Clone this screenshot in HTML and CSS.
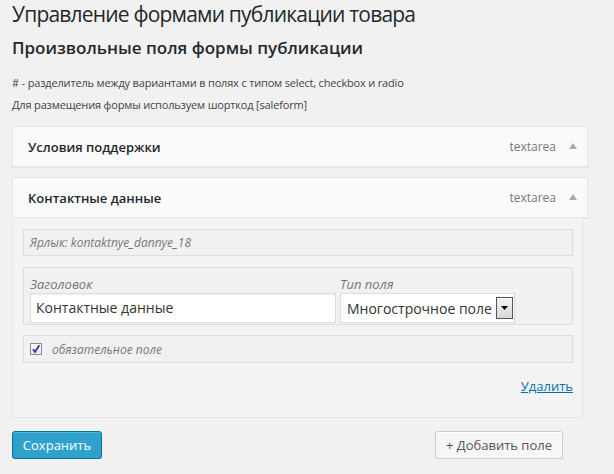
FILE: index.html
```html
<!DOCTYPE html>
<html lang="ru">
<head>
<meta charset="utf-8">
<title>Управление формами публикации товара</title>
<link rel="stylesheet" href="styles.css">
</head>
<body>
<div class="wrap">
  <h1 class="page-title">Управление формами публикации товара</h1>
  <h2 class="section-title">Произвольные поля формы публикации</h2>
  <p class="note"># - разделитель между вариантами в полях с типом select, checkbox и radio</p>
  <p class="note">Для размещения формы используем шорткод [saleform]</p>

  <div class="field-card">
    <div class="card-head">
      <span class="card-name">Условия поддержки</span>
      <span class="card-type">textarea</span>
      <span class="card-toggle"></span>
    </div>
  </div>

  <div class="field-card">
    <div class="card-head">
      <span class="card-name">Контактные данные</span>
      <span class="card-type">textarea</span>
      <span class="card-toggle"></span>
    </div>
    <div class="card-body">
      <div class="inner-box slug-box">Ярлык: kontaktnye_dannye_18</div>
      <div class="inner-box fields-box">
        <div class="fcol title-col">
          <label class="flabel">Заголовок</label>
          <div class="text-input">Контактные данные</div>
        </div>
        <div class="fcol type-col">
          <label class="flabel">Тип поля</label>
          <div class="select-input">
            <span class="select-value">Многострочное поле</span>
            <span class="select-btn"><svg width="7" height="4" viewBox="0 0 7 4"><path d="M0 0H7L3.5 4Z" fill="#000"/></svg></span>
          </div>
        </div>
      </div>
      <div class="inner-box check-box">
        <span class="checkbox"><svg width="10" height="10" viewBox="0 0 10 10"><path d="M2 5.2L4 8L8.3 1.2" fill="none" stroke="#2a3a9a" stroke-width="1.8"/></svg></span>
        <span class="check-label">обязательное поле</span>
      </div>
      <div class="delete-row"><a class="delete-link" href="#">Удалить</a></div>
    </div>
  </div>

  <div class="actions">
    <button class="btn btn-primary">Сохранить</button>
    <button class="btn btn-secondary">+ Добавить поле</button>
  </div>
</div>
</body>
</html>
```
FILE: styles.css
```css
html, body {
  margin: 0;
  padding: 0;
  background: #f1f1f1;
}
body {
  font-family: "Open Sans", "Noto Sans", sans-serif;
  color: #444;
  font-size: 13px;
}
.wrap {
  padding: 0 26px 0 12px;
}
.page-title {
  margin: 0;
  font-size: 21px;
  letter-spacing: -0.8px;
  line-height: 28px;
  font-weight: 400;
  color: #23282d;
  white-space: nowrap;
}
.section-title {
  margin: 8px 0 0;
  font-size: 17px;
  line-height: 24px;
  font-weight: 600;
  color: #23282d;
}
.note {
  margin: 0;
  font-size: 11px;
  letter-spacing: -0.17px;
  line-height: 22px;
  color: #444;
}
.section-title + .note {
  margin-top: 12px;
}
.field-card {
  margin-top: 10px;
}
.card-head {
  display: flex;
  align-items: center;
  height: 39px;
  background: #fafafa;
  border: 1px solid #e5e5e5;
  box-shadow: 0 1px 1px rgba(0,0,0,0.04);
  padding: 0 9px 0 15px;
}
.card-name {
  flex: 1;
  font-size: 13px;
  font-weight: 600;
  color: #23282d;
}
.card-type {
  font-size: 12px;
  color: #777;
  margin-right: 13px;
}
.card-toggle {
  width: 0;
  height: 0;
  border-left: 4px solid transparent;
  border-right: 4px solid transparent;
  border-bottom: 6px solid #aaa;
  margin-right: 1px;
  margin-bottom: 2px;
}
.card-body {
  margin-right: 5px;
  background: #f3f3f3;
  border: 1px solid #e5e5e5;
  border-top: 0;
  padding: 11px 9px 22px 10px;
}
.inner-box {
  border: 1px solid #dedede;
  background: #f1f1f1;
  margin-bottom: 10px;
}
.slug-box {
  height: 25px;
  line-height: 25px;
  padding-left: 6px;
  font-size: 12px;
  font-style: italic;
  color: #777;
  margin-bottom: 11px;
}
.fields-box {
  display: flex;
  gap: 4px;
  padding: 8px 6px 0 6px;
  height: 48px;
}
.fcol {
  display: flex;
  flex-direction: column;
}
.title-col {
  width: 306px;
}
.flabel {
  font-size: 13px;
  font-style: italic;
  color: #777;
  line-height: 17px;
}
.text-input {
  height: 28px;
  line-height: 28px;
  background: #fff;
  border: 1px solid #ddd;
  box-shadow: inset 0 1px 2px rgba(0,0,0,0.07);
  padding-left: 5px;
  font-size: 14px;
  color: #333;
}
.select-input {
  box-sizing: border-box;
  display: flex;
  align-items: center;
  height: 30px;
  width: 175px;
  background: #fff;
  border: 1px solid #ddd;
  padding-left: 6px;
  font-size: 14px;
  color: #333;
}
.select-value {
  flex: 1;
  white-space: nowrap;
}
.select-btn {
  box-sizing: border-box;
  display: flex;
  align-items: center;
  justify-content: center;
  width: 17px;
  height: 22px;
  margin-right: 1px;
  border: 1px solid #555;
  background: linear-gradient(#f4f4f4, #d8d8d8);
}
.check-box {
  display: flex;
  align-items: center;
  height: 26px;
  padding-left: 6px;
  margin-bottom: 0;
}
.checkbox {
  width: 10px;
  height: 10px;
  border: 1px solid #8a8a8a;
  background: linear-gradient(#fff, #e6e6ee);
  display: flex;
  align-items: center;
  justify-content: center;
  margin-right: 10px;
}
.check-label {
  font-size: 12px;
  font-style: italic;
  color: #777;
}
.delete-row {
  display: flex;
  justify-content: flex-end;
  margin-top: 14px;
  line-height: 18px;
}
.delete-link {
  font-size: 13px;
  color: #0073aa;
  text-decoration: underline;
}
.actions {
  display: flex;
  justify-content: space-between;
  margin-top: 13px;
  padding-right: 25px;
}
.btn {
  font-family: "Open Sans", "Noto Sans", sans-serif;
  font-size: 13px;
  height: 28px;
  border-radius: 3px;
  padding: 0;
  line-height: 26px;
  white-space: nowrap;
  cursor: pointer;
}
.btn-primary {
  width: 90px;
  background: #2ea2cc;
  border: 1px solid #0074a2;
  color: #fff;
  box-shadow: inset 0 1px 0 rgba(120,200,230,0.5), 0 1px 0 rgba(0,0,0,0.15);
}
.btn-secondary {
  width: 128px;
  background: #f7f7f7;
  border: 1px solid #ccc;
  color: #555;
  box-shadow: inset 0 1px 0 #fff, 0 1px 0 rgba(0,0,0,0.08);
}
```
